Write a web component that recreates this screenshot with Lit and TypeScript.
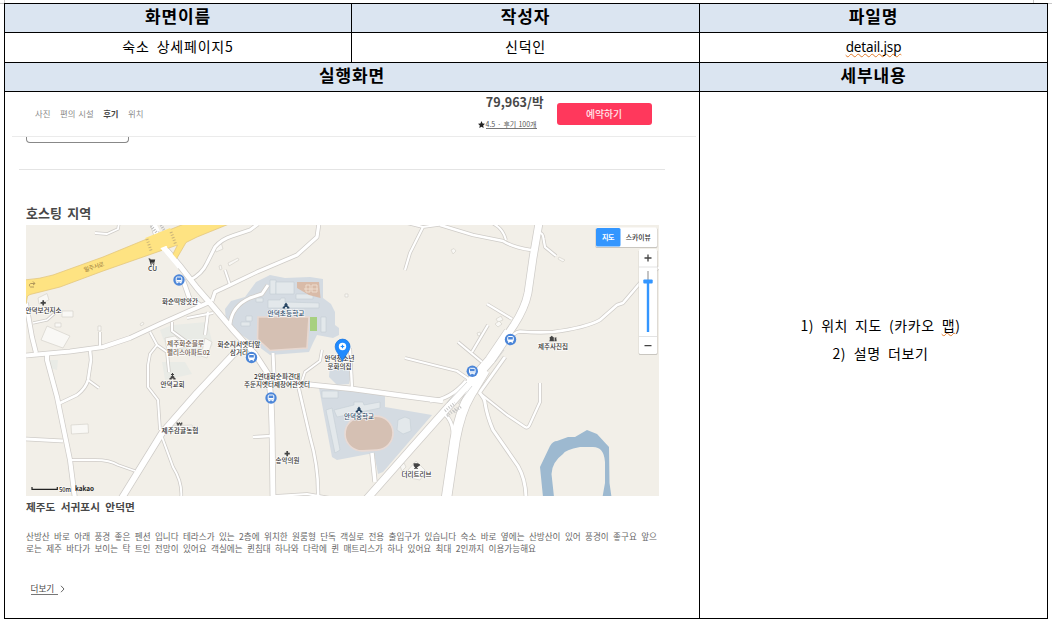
import { LitElement, html, svg, css } from "lit";
import { customElement } from "lit/decorators.js";

type Road = [string, number];
type Label = [string, number, number, number, string?];

const ROADS: Road[] = [
  ["M26 303 32 337 36 353", 4],
  ["M26 355.500 70 351.500 103 347 130 338 160 324 187 312 212 301", 4],
  ["M47 353 47 360 57 397 70 460 75 499", 4.2],
  ["M26 439 63 441", 3],
  ["M70 460 95 460Q110 460 118 465L135 471", 1.8],
  ["M58 404 77 395Q86 388 88 380L91 360 90 350", 2.6],
  ["M88 380 99 388", 2],
  ["M150 332 157 345 150 354 148 365 148 387 158 400 160 430", 2],
  ["M157 345 167 352 169 372", 2],
  ["M162 437 173 467Q183 483 181 499", 2],
  ["M100 347V332", 2],
  ["M33 323 47 320 55 313", 1.6],
  ["M95 233 107 234 118 229 119 223", 1.8],
  ["M190 280Q202 274 207 263L215 247Q222 239 232 236L250 230 258 224", 3],
  ["M212 301 215 292 230 285 257 272 297 255 317 237 319 223", 3.2],
  ["M225 270 230 285", 2],
  ["M183 280 190 300 200 305", 4],
  ["M187 318 213 313", 2.2],
  ["M208 312 205 335", 2.4],
  ["M172 322V331L187 342", 2],
  ["M407 223 423 227 445 224M423 227 410 253 405 270", 2.2],
  ["M440 225 473 235 503 241Q512 247 531 250", 2.6],
  ["M492 223Q503 228 506 240", 2],
  ["M540 233Q543 233 543.500 239L545 247 556 256", 2.2],
  ["M510 340Q514 332 520 331.500 538 333 553 332 585 328 600 320L617 305 623 303 640 283 659 267", 2.6],
  ["M487 304 512 319", 2.2],
  ["M488 325 472 352M458 342 482 362", 2.2],
  ["M230 324Q232 306 250 298L262 294 268 285", 3],
  ["M273 353 274 374", 3],
  ["M405 358 437 366 457 371 470 380", 2.2],
  ["M350 348 352 388", 2.4],
  ["M322 350 320 361 305 372 300 387", 2],
  ["M298 385 310 437Q319 468 318 499", 2.6],
  ["M253 437 271 436", 2.4],
  ["M275 496 307 494 330 498", 2.2],
  ["M372 453 375 482", 3.6],
  ["M479 392Q485 399 485 403 487 416 493 430L518 466Q526 480 526 499", 3],
  ["M482 395 507 415 525 427Q528 429 530 424L540 402V383", 2.2],
  ["M505 357 480 392", 3],
  ["M153 223 158 240 180 266 197 288 217 311 233 330 255 354 268 374 271 398 272 427 273 499", 5],
  ["M270 376Q290 383 313 385L353 389 397 395 443 401", 4.6],
  ["M120 501 162 433 197 393 228 360 244 343", 6],
  ["M365 501 410 450 450 405 470 382 490 360 514 325Q525 308 528 293L533 258 539 223", 7],
  ["M446 501 455 440Q460 412 470 395L485 370", 9.500],
  ["M470 383 490 360 509 332", 9.500],
  ["M430 401Q450 400 466 381M442 412Q454 420 453 438", 3],
];

const BLOCKS = [
  "38 298 47 293.500 49 300 39 304z", "47 326 70 336 63 348 41 340z", "62 311h11v6h-11z",
  "55 323h6v4h-6z", "98 326h3v5h-3z", "140 324 143 322 144 324 141 326z", "214 245 221 242 223 249 216 252z",
  "228 263 238 258 239 260 229 266z", "219 266 221 265 222 269 220 270z", "71 425 88 424 88.500 433 71.500 434z",
  "205 338 212 342 207 358 201 356z", "165 338 175 336 187 347 167 351z", "165 426 192 425 193 427 165 429z",
  "451 250 454 248.500 456 251 453 254z", "496 319 501 316 503 320 498 322z", "495 324 499 321 502 324 498 327z",
  "559 257 565 260 563 262 558 259z", "477 333 480 332 481 335 478 336z", "345 294h3v3h-3z",
  "400 466 404 463 406 467 402 471z", "408 470 416 461 426 471 420 480 410 478z",
];

const SCHOOL_BLOCKS = [
  "270 280h6v14h-6z", "276 282h18v12h-18z", "296 294h17v5h-17z", "268 300 280 300 281 298 285 298 285 302 319 303 319 308 268 308z",
  "256 298h7v4h-7z", "246 316h6v5h-6z", "241 322h9v4h-9z", "321 317h5v15h-5z",
  "322 391h16v7h-16z", "326 410 332 408 340 450 335 453z", "334 410 354 405 354 402 363 402 364 405 380 402 380 408 337 417z",
  "398 420 405 417 410 419 411 431 403 434 397 430z",
];

const LABELS: Label[] = [
  ["CU", 152.500, 270.800, 9],
  ["안덕보건지소", 43.500, 312.500, 36],
  ["화순떡방앗간", 180, 304, 36],
  ["제주화순블루", 185.500, 346.300, 37, "#6c584d"],
  ["펠리스아파트02", 188.500, 354.700, 43, "#6c584d"],
  ["화순지서옛터앞", 239, 346.700, 43],
  ["삼거리", 239, 354.700, 18],
  ["안덕초등학교", 286, 315.500, 37, "#34506d"],
  ["안덕청소년", 339.500, 361.400, 30],
  ["문화의집", 339.500, 369.200, 24],
  ["2연대화순파견대", 277, 378.900, 46],
  ["주둔지옛터제창여관옛터", 277, 386.700, 66],
  ["안덕교회", 172.500, 386.700, 24],
  ["제주감귤농협", 180, 433.100, 37],
  ["송악의원", 287.500, 463.200, 24],
  ["안덕중학교", 359, 419.200, 30, "#34506d"],
  ["더리트리브", 416.500, 477.100, 30],
  ["제주사진집", 553, 348.800, 30],
];

const STOPS = [[179, 280], [251.500, 357.500], [271, 398], [510.500, 339.500], [472.300, 371.300]];

@customElement("area-map")
class AreaMap extends LitElement {
  static styles = css`
    :host { display: block; width: 633px; height: 271px; }
    svg { display: block; }
    text { font-family: "Noto Sans CJK KR", "Noto Sans KR", sans-serif; text-anchor: middle; }
    .label { font-size: 6.600px; font-weight: 500; paint-order: stroke; stroke: #fff; stroke-width: 1.4px; stroke-opacity: .8; }
    .casing { fill: none; stroke: #cfccc8; stroke-linejoin: round; }
    .road { fill: none; stroke: #fff; stroke-linejoin: round; }
  `;

  render() {
    return html`<svg width="633" height="271" viewBox="26 225 633 271">
      <rect x="26" y="225" width="633" height="271" fill="#f2efe8" />
      <path fill="#e9ebe6" d="M160 330 172 325 207 322 213 345 200 358 168 352zM162 362 185 362 192 374 165 380zM45 360 58 360 57 370 49 368z" />
      <path fill="#d4dbe2" d="M225 309 231 301 245 297 256 282 270 275 285 278 310 277 323 279V298L331 304 335 312V325L339 328V335L333 338 317 335 313 343 309 352 270 355 255 344 240 334 226 322z" />
      <path fill="#d4dbe2" d="M319 388 360 391 385 396V407L432 415 383 472 378 474 374 453 337 460 332 457zM330 366 352 370 349 384 337 385 329 377z" />
      ${SCHOOL_BLOCKS.map((p) => svg`<path d="M${p}" fill="#e3e8eb" stroke="#c5ced5" stroke-width=".6"/>`)}
      <path fill="#d5c0b3" stroke="#e8d8d0" stroke-width="1.600" d="M258 317H309L307 348 270 350.500 257.500 339z" />
      <path fill="#d9bba8" d="M297 282H319L320.500 298 309 295 297 288z" />
      <path fill="none" stroke="#eddccd" d="M306 285h4v7h-4zM312 285h5v7h-5zM304 289h14" />
      <rect x="310" y="317" width="7" height="14" fill="#a7d080" />
      <rect x="345" y="416.500" width="48" height="34" rx="17" fill="#d5c0b3" stroke="#e9dad4" stroke-width="1.600" transform="rotate(-3 369 433)" />
      <path fill="#9db9d0" d="M543 497 540 467 550 446Q553 441 557 441L568 437H575L587 430 597 434 609 447 609.500 483 611.500 497H602.500L605 483V462Q604 447 593 447L580 447Q565 450 563 454 552 462 551.500 474L554 497z" />
      ${BLOCKS.map((p) => svg`<path d="M${p}" fill="#f9f8f5" stroke="#d5d2cc" stroke-width=".7"/>`)}

      ${ROADS.map(([d, w]) => svg`<path class="casing" d=${d} stroke-width=${w + 1.5}/>`)}
      ${ROADS.map(([d, w]) => svg`<path class="road" d=${d} stroke-width=${w}/>`)}

      <path fill="#fee382" stroke="#e3c77d" stroke-width=".8" d="M24 280Q40 279 53 275L103 257 148 238.500 184 224H229L197 237 186 242.500 175 261.500 172 256 177.500 245 153 253.500 103 271 60 287 30 294.500 27.500 296 26 304 24 304z" />
      <path stroke="#fff" stroke-width="6" d="M153 223 157 232M158 240.500 165 249" />
      <path stroke="#fee382" stroke-width="15" d="M148 245 173 235" />
      <path stroke="#fff" stroke-width="5.500" d="M164 248 180 267" />
      <path stroke="#c9b278" stroke-width="3" stroke-dasharray="1 1.800" d="M147 239 151.500 252M171 232 175.500 244" />
      <path stroke="#bbb" stroke-width="3" stroke-dasharray="1 1.400" d="M151 226 157 233M161 225 164 230" />
      <path fill="none" stroke="#b2985c" stroke-width="1" d="M34 287h-3.500a2 2 0 0 1 0-3.500H35M33 281.500 35 283.500 33 285" />
      <text x="94" y="269" font-size="6" fill="#98783a" textLength="21" transform="rotate(-17 94 267)">일주서로</text>
      <path stroke="#c4c4c4" stroke-width="3" stroke-dasharray="1 1.500" d="M445 411 455 403M447 416 457 408M454 412 462 406" />
      <path stroke="#ccc" stroke-width=".7" d="M495 362 504 350M447 403 467 382M458 404 472 386" />

      ${LABELS.map(([t, x, y, w, c]) => svg`<text class="label" x=${x} y=${y} fill=${c ?? "#333"} textLength=${w} lengthAdjust="spacingAndGlyphs">${t}</text>`)}

      <path stroke="#444" stroke-width="1.700" d="M43.200 300.300v5.200M40.600 302.900h5.200M287.200 451v5.200M284.600 453.600h5.200" />
      <path fill="#333" d="M148.500 258.500h1.600l.5 1h4.600l-.8 3.300h-3.600l.2.600h3.600v.7h-4.200l-1.300-4.800h-.6zM150.500 264.300h1.200v1.200h-1.200zM153 264.300h1.200v1.200H153z" />
      <path fill="#294765" d="M286 302.500l1.600 2v1.400l1.700 1v1.600h-2.300v-1.500h-2v1.500h-2.300v-1.600l1.700-1v-1.400zM359 406.500l1.600 2v1.400l1.700 1v1.600h-2.300V411h-2v1.500h-2.300v-1.600l1.700-1v-1.400z" />
      <path fill="#444" d="M172 373h1v1h1v.9h-1v.8l1.400 1v1.100l1.200.5v1.300h-2.300v-1.200h-1.600v1.200h-2.300v-1.300l1.200-.5v-1.100l1.400-1v-.8h-1v-.9h1z" />
      <path fill="none" stroke="#444" stroke-width=".9" d="M177 422.300l1 3.200 1.400-3 1.400 3 1-3.200M176.500 423.800h6" />
      <path fill="#444" d="M413.500 463.300h5v.7h1.300v1.800l-1.600.7-1.200.9v.6h1v.7h-4v-.7h1v-.6l-1.300-1.400zM549.200 338l2.500-2.300 2.600 2.300h-.5v2.500h.5v.8h-5v-.8h.5V338zM554.600 337.500h2v.9h-.5v.8h.5v2h-2z" />

      ${STOPS.map(([x, y]) => svg`<g transform="translate(${x} ${y})">
        <circle r="5.700" fill="#4c86d8"/>
        <rect x="-2.800" y="-3" width="5.600" height="5" rx="1" fill="none" stroke="#fff" stroke-width="1"/>
        <path d="M-2.500 0h5v1.500h-5zM-2.500 2h1.400v1.300h-1.400zM1.100 2h1.400v1.300H1.100z" fill="#fff"/>
      </g>`)}

      <path fill="#1f8aff" stroke="#1670d8" stroke-width=".7" d="M342.500 361.500C340.500 355.500 335.200 352 335.200 346.500a7.400 7.400 0 0 1 14.800 0C350 352 344.500 355.500 342.500 361.500z" />
      <circle cx="342.500" cy="346.500" r="3.700" fill="#fff" />
      <path stroke="#1f8aff" stroke-width="1.200" d="M340.700 346.500h3.600M342.500 344.700v3.600" />

      <path fill="none" stroke="#222" stroke-width="1.200" d="M32 487v2.400h25.300V487" />
      <text class="label" x="65" y="491.800" font-size="6" fill="#222" textLength="12" lengthAdjust="spacingAndGlyphs">50m</text>
      <text x="84.500" y="491.300" font-size="7" font-weight="700" fill="#222" textLength="19" lengthAdjust="spacingAndGlyphs">kakao</text>

      <rect x="595.500" y="228" width="62" height="20" rx="1.500" fill="#c9c6c0" />
      <rect x="596" y="227.500" width="61" height="19.500" rx="1.500" fill="#fff" />
      <rect x="596" y="228" width="24.500" height="18.500" rx="1.500" fill="#3396ff" />
      <text x="608.200" y="239.500" font-size="7" font-weight="700" fill="#fff" textLength="12.500">지도</text>
      <text x="638.200" y="239.500" font-size="7" font-weight="500" fill="#333" textLength="25" lengthAdjust="spacingAndGlyphs">스카이뷰</text>
      <rect x="638.700" y="250" width="18.800" height="105" rx="1.500" fill="#c9c6c0" />
      <rect x="639" y="249" width="18" height="105" rx="1.500" fill="#fff" />
      <path stroke="#e3e3e3" stroke-width="1" d="M639 267h18M639 336.500h18" />
      <path stroke="#444" stroke-width="1.300" d="M644.500 258h7M648 254.500v7M644.500 345.700h7" />
      <path stroke="#c4c4c4" stroke-width="2" d="M648 271v10" />
      <path stroke="#3396ff" stroke-width="2.400" d="M648 281v51" />
      <rect x="643.300" y="279.500" width="9.400" height="4" rx="1" fill="#3396ff" />
    </svg>`;
  }
}

@customElement("listing-view")
class ListingView extends LitElement {
  static styles = css`
    :host { display: block; color: #484848; }
    .bar { box-sizing: border-box; display: flex; height: 45px; margin: 0 3px 0 7px; border-bottom: 1px solid #ebebeb; }
    nav { flex: none; box-sizing: border-box; display: flex; gap: 9.500px; padding: 15px 0 0 23px; width: 453px; font-size: 8.400px; line-height: 13px; color: #8a8a8a; white-space: nowrap; }
    nav span { word-spacing: 1px; }
    .active { color: #444; font-weight: 700; }
    .price { flex: none; width: 91.500px; padding-top: 1px; }
    .amount { text-align: right; font-size: 12.600px; font-weight: 700; line-height: 17px; margin-right: 13px; white-space: nowrap; }
    .rating { display: flex; align-items: center; gap: 1px; margin: 8px 0 0 12.500px; height: 12px; }
    .rating svg { flex: none; }
    .rating u { flex: none; width: 51px; font-size: 7px; line-height: 8px; white-space: nowrap; text-align-last: justify; text-decoration: none; border-bottom: 1px solid #777; color: #555; }
    .book { flex: none; width: 95px; height: 22px; margin: 11px 0 0; padding: 0; border: 0; border-radius: 3px; background: #ff385c; color: #ffe5ea; font: 500 9.800px/22px "Noto Sans CJK KR", sans-serif; }
    .more-reviews { box-sizing: border-box; width: 103px; height: 6px; margin-left: 20.500px; border: 1.500px solid #888; border-top: 0; border-radius: 0 0 4px 4px; }
    hr { border: 0; height: 1px; background: #e4e4e4; margin: 26px 34px 0 14px; }
    .body { padding: 33px 0 0 21px; }
    h2 { margin: 0; font-size: 13px; line-height: 20px; font-weight: 700; word-spacing: 2.500px; height: 22px; }
    h3 { margin: 0; font-size: 10.650px; line-height: 18px; padding-top: 2px; font-weight: 700; word-spacing: 3px; }
    p { margin: 14px 0 0; font-size: 8.600px; line-height: 12px; color: #686868; }
    .line { display: block; white-space: nowrap; text-align-last: justify; }
    .first { width: 631px; }
    .second { width: 510px; }
    .more { display: flex; align-items: center; gap: 2px; margin: 29px 0 0 4.500px; font-size: 8.600px; line-height: 12px; }
    .more u { width: 27px; line-height: 11px; text-decoration: none; border-bottom: 1px solid #777; }
  `;

  render() {
    return html`
      <div class="bar">
        <nav><span>사진</span><span>편의 시설</span><span class="active">후기</span><span>위치</span></nav>
        <div class="price">
          <div class="amount">79,963/박</div>
          <div class="rating">
            <svg width="7" height="7" viewBox="0 0 24 24"><path fill="#222" d="M12 0l3.600 8.200 8.400.9-6.300 5.900 1.800 9L12 19.500 4.500 24l1.800-9L0 9.100l8.400-.9z" /></svg>
            <u>4.5 · 후기 100개</u>
          </div>
        </div>
        <button class="book">예약하기</button>
      </div>
      <div class="more-reviews"></div>
      <hr />
      <div class="body">
        <h2>호스팅 지역</h2>
        <area-map></area-map>
        <h3>제주도 서귀포시 안덕면</h3>
        <p>
          <span class="line first">산방산 바로 아래 풍경 좋은 펜션 입니다 테라스가 있는 2층에 위치한 원룸형 단독 객실로 전용 출입구가 있습니다 숙소 바로 옆에는 산방산이 있어 풍경이 좋구요 앞으</span>
          <span class="line second">로는 제주 바다가 보이는 탁 트인 전망이 있어요 객실에는 퀸침대 하나와 다락에 퀸 매트리스가 하나 있어요 최대 2인까지 이용가능해요</span>
        </p>
        <div class="more"><u>더보기</u><svg width="5" height="8" viewBox="0 0 5 8"><path d="M1 .8 4 4 1 7.200" fill="none" stroke="#666" /></svg></div>
      </div>
    `;
  }
}

@customElement("app-root")
class AppRoot extends LitElement {
  static styles = css`
    :host { display: block; width: 1052px; height: 621px; overflow: hidden; background: #fff; color: #000; font-family: "Noto Sans CJK KR", "Noto Sans KR", sans-serif; }
    .margin { display: flex; justify-content: space-between; height: 3px; }
    .left { width: 4px; border-right: 1px solid #c8c8c8; }
    .right { width: 18px; border-left: 1px solid #c8c8c8; }
    .row { display: grid; grid-template-columns: 4px 1044px 4px; }
    .tick { height: 1px; background: #c8c8c8; }
    .table { box-sizing: border-box; display: grid; width: 1044px; height: 616px; padding: 1px; gap: 1px; background: #000; grid-template-columns: 346px 347px 347px; grid-template-rows: 28px 29px 28px 526px; }
    .table > * { background: #fff; min-width: 0; min-height: 0; }
    .table > .head { background: #dbe5f1; font-size: 17px; letter-spacing: .8px; font-weight: 700; line-height: 24px; text-align: center; }
    .val { font-size: 14px; letter-spacing: .8px; line-height: 26px; text-align: center; word-spacing: 3px; }
    .wide { grid-column: span 2; }
    .notes { display: flex; flex-direction: column; align-items: center; justify-content: center; font-size: 14px; letter-spacing: .6px; line-height: 28px; padding: 0 0 33px 14px; }
    .notes > span { white-space: nowrap; text-align-last: justify; }
    .n1 { width: 160px; }
    .n2 { width: 96px; }
    .file { font-family: "Noto Sans", sans-serif; font-size: 13.500px; letter-spacing: -.15px; }
    .typo { text-decoration: underline wavy #e07a2a 1px; text-decoration-skip-ink: none; text-underline-offset: 1px; }
  `;

  render() {
    return html`
      <div class="margin"><div class="left"></div><div class="right"></div></div>
      <div class="row">
        <div class="tick"></div>
        <div class="table">
          <div class="head">화면이름</div><div class="head">작성자</div><div class="head">파일명</div>
          <div class="val">숙소 상세페이지5</div><div class="val">신덕인</div><div class="val"><span class="typo file">detail.jsp</span></div>
          <div class="head wide">실행화면</div><div class="head">세부내용</div>
          <listing-view class="wide"></listing-view>
          <div class="notes"><span class="n1">1) 위치 지도 (카카오 <span class="typo">맵</span>)</span><span class="n2">2) 설명 더보기</span></div>
        </div>
        <div class="tick"></div>
      </div>
    `;
  }
}
